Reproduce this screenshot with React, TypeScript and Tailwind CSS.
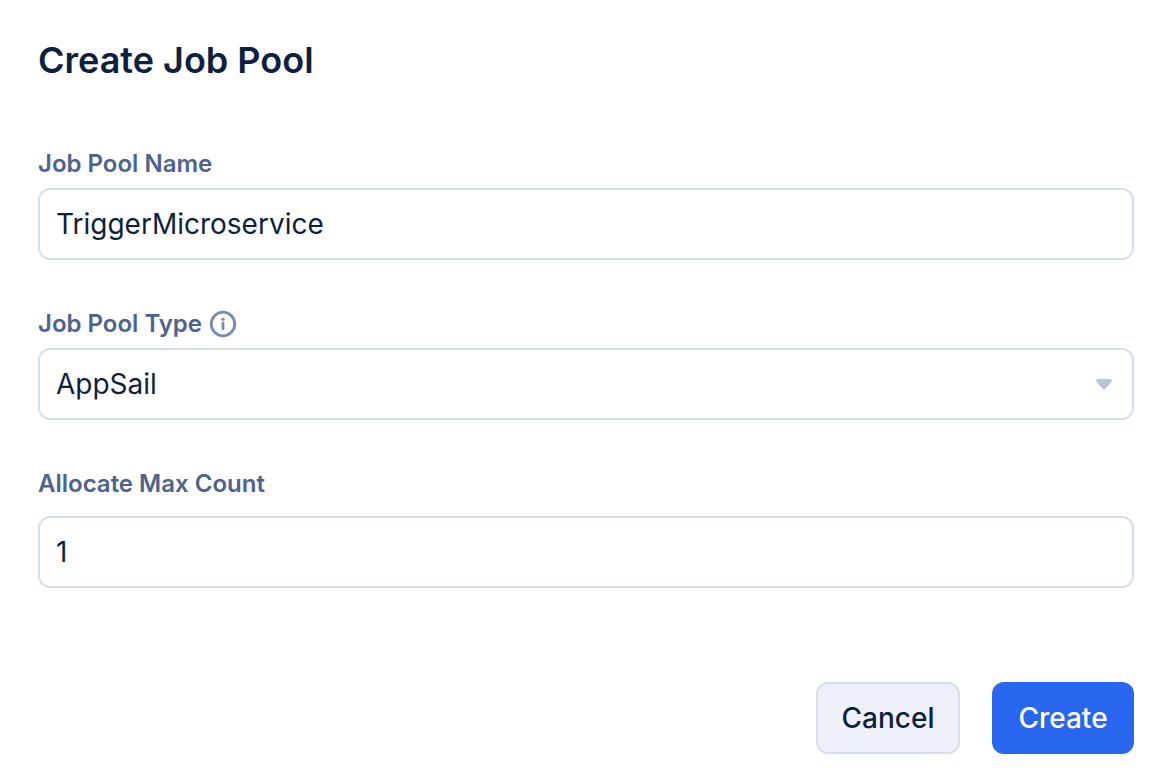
import { useState } from "react";
import type { FormEvent } from "react";

const POOL_TYPES = ["AppSail", "Function", "Circuit", "Webhook"];

const LABEL = "text-2xl leading-8 font-semibold text-[#4d628c]";
const FIELD =
  "block w-full h-18 rounded-xl border-2 border-[#d6deee] bg-white px-4 text-[28px] text-[#0e1f40] outline-none focus:border-[#2966f0]";

export default function App() {
  const [name, setName] = useState("TriggerMicroservice");
  const [type, setType] = useState("AppSail");
  const [maxCount, setMaxCount] = useState("1");

  const handleSubmit = (e: FormEvent) => {
    e.preventDefault();
  };

  return (
    <form
      onSubmit={handleSubmit}
      className="bg-white pl-[38px] pr-[37px] pt-9 pb-6 font-['Inter',sans-serif]"
    >
      <h1 className="text-4xl leading-12 font-semibold text-[#0e1f40]">Create Job Pool</h1>

      <div className="mt-16">
        <label htmlFor="pool-name" className={`block ${LABEL}`}>
          Job Pool Name
        </label>
        <input
          id="pool-name"
          type="text"
          value={name}
          onChange={(e) => setName(e.target.value)}
          className={`mt-2 ${FIELD}`}
        />
      </div>

      <div className="mt-12">
        <div className="flex items-center gap-[7px]">
          <label htmlFor="pool-type" className={LABEL}>
            Job Pool Type
          </label>
          <InfoIcon />
        </div>
        <div className="relative mt-2">
          <select
            id="pool-type"
            value={type}
            onChange={(e) => setType(e.target.value)}
            className={`appearance-none ${FIELD}`}
          >
            {POOL_TYPES.map((t) => (
              <option key={t} value={t}>
                {t}
              </option>
            ))}
          </select>
          <CaretIcon />
        </div>
      </div>

      <div className="mt-12">
        <label htmlFor="max-count" className={`block ${LABEL}`}>
          Allocate Max Count
        </label>
        <input
          id="max-count"
          type="text"
          inputMode="numeric"
          value={maxCount}
          onChange={(e) => setMaxCount(e.target.value)}
          className={`mt-4 ${FIELD}`}
        />
      </div>

      {/* actions */}
      <div className="mt-[94px] flex justify-end gap-8">
        <button
          type="button"
          className="h-18 w-36 rounded-xl border-2 border-[#d6deee] bg-[#eef1fb] text-[28px] font-medium text-[#0e1f40]"
        >
          Cancel
        </button>
        <button
          type="submit"
          className="h-18 w-[142px] rounded-xl bg-[#2966f0] text-[28px] font-medium text-white"
        >
          Create
        </button>
      </div>
    </form>
  );
}

function InfoIcon() {
  return (
    <svg width="28" height="28" viewBox="0 0 28 28" fill="none" aria-hidden="true">
      <circle cx="14" cy="14" r="11.8" stroke="#7b8bad" strokeWidth="2.8" />
      <path d="M14 13.200v5.600" stroke="#7b8bad" strokeWidth="2.8" strokeLinecap="round" />
      <circle cx="14" cy="9.3" r="1.7" fill="#7b8bad" />
    </svg>
  );
}

function CaretIcon() {
  return (
    <svg
      width="16"
      height="12"
      viewBox="0 0 16 12"
      className="pointer-events-none absolute right-[22px] top-1/2 -translate-y-1/2"
      aria-hidden="true"
    >
      <path
        d="M1.800 1h12.400c1.500 0 2.200 1.700 1.200 2.800l-6 7c-.8.9-2 .9-2.800 0l-6-7C-.4 2.700.3 1 1.800 1z"
        fill="#bac3d6"
      />
    </svg>
  );
}
